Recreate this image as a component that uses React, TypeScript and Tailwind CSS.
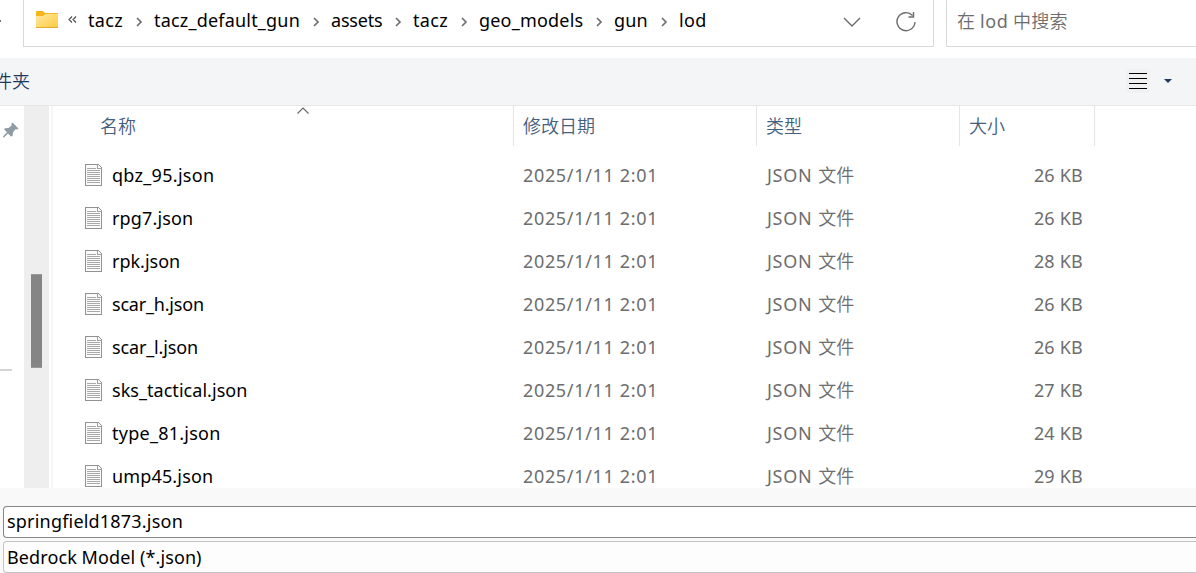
import React from "react";

const crumbs = [
  { label: "tacz", width: "w-[66px]", tracking: "tracking-[0.3px]" },
  { label: "tacz_default_gun", width: "w-[177px]", tracking: "tracking-[0.2px]" },
  { label: "assets", width: "w-[82px]", tracking: "tracking-[-0.2px]" },
  { label: "tacz", width: "w-[66px]", tracking: "tracking-[0.3px]" },
  { label: "geo_models", width: "w-[135px]", tracking: "tracking-[0.2px]" },
  { label: "gun", width: "w-[65px]", tracking: "tracking-[0.1px]" },
  { label: "lod", width: "w-[40px]", tracking: "tracking-[0.3px]" },
];

const files = [
  { name: "qbz_95.json", size: "26 KB", tracking: "tracking-[0.3px]" },
  { name: "rpg7.json", size: "26 KB", tracking: "tracking-[0.15px]" },
  { name: "rpk.json", size: "28 KB", tracking: "tracking-normal" },
  { name: "scar_h.json", size: "26 KB", tracking: "tracking-[-0.2px]" },
  { name: "scar_l.json", size: "26 KB", tracking: "tracking-[-0.15px]" },
  { name: "sks_tactical.json", size: "27 KB", tracking: "tracking-[0.04px]" },
  { name: "type_81.json", size: "24 KB", tracking: "tracking-[0.25px]" },
  { name: "ump45.json", size: "29 KB", tracking: "tracking-[0.15px]" },
];

function FolderIcon() {
  return (
    <svg width="22" height="18" viewBox="0 0 22 18" className="shrink-0">
      <defs>
        <linearGradient id="folder" x1="0" y1="0" x2="1" y2="1">
          <stop offset="0" stopColor="#ffe8a3" />
          <stop offset="1" stopColor="#fdcb40" />
        </linearGradient>
      </defs>
      <path d="M0 1Q0 0 1 0H7L9 2H21Q22 2 22 3V8H0Z" fill="#f5b51d" />
      <path d="M0 5H7L9.500 3H22V16.500H0Z" fill="url(#folder)" />
      <path d="M0 16H22V16.500Q22 17 21 17H1Q0 17 0 16.500Z" fill="#e2ac2c" />
    </svg>
  );
}

function FileIcon() {
  return (
    <svg width="18" height="22" viewBox="0 0 18 22" className="shrink-0" shapeRendering="crispEdges">
      <path d="M0.500 0.500H13.500L16.500 3.500V21.500H0.500Z" fill="#fbfbfb" stroke="#929292" />
      <path d="M12.500 0.500V4.500H16.500" fill="none" stroke="#a0a0a0" />
      <path d="M2 4.500H11M2 6.500H15M2 8.500H15M2 10.500H15M2 12.500H15M2 14.500H15M2 16.500H15M2 18.500H15" stroke="#a9a9a9" />
    </svg>
  );
}

function Crumb({ label, width, tracking, last }: { label: string; width: string; tracking: string; last: boolean }) {
  return (
    <div className={`flex shrink-0 items-center justify-between pr-[18px] ${width}`}>
      <span className={`whitespace-nowrap ${tracking}`}>{label}</span>
      {!last && (
        <svg width="7" height="10" viewBox="0 0 7 10" className="-mr-[7px] mt-[3px] shrink-0">
          <path d="M1 1L5 5L1 9" fill="none" stroke="#6e6e6e" strokeWidth="1.700" />
        </svg>
      )}
    </div>
  );
}

export default function App() {
  return (
    <div className="flex h-[573px] w-[1196px] flex-col overflow-hidden bg-white font-['Noto_Sans','Noto_Sans_CJK_SC',sans-serif] text-[18px] leading-6 text-black">
      <div className="flex h-[58px] shrink-0 items-start">
        <div className="w-[23px] shrink-0 pt-5">
          <div className="h-0.5 w-px bg-[#777]" />
        </div>
        <div className="flex h-[47px] w-[911px] shrink-0 border border-t-0 border-[#d9d9d9] pl-3">
          <div className="pt-[11px]">
            <FolderIcon />
          </div>
          <svg width="9" height="7" viewBox="0 0 9 7" className="ml-2.5 mt-4 shrink-0">
            <path d="M4 0.500L1 3.500L4 6.500M8 0.500L5 3.500L8 6.500" fill="none" stroke="#4a4a4a" strokeWidth="1.100" />
          </svg>
          <div className="ml-[11px] flex h-10 flex-1 items-center">
            {crumbs.map((c, i) => (
              <Crumb key={i} {...c} last={i === crumbs.length - 1} />
            ))}
          </div>
          <svg width="18" height="10" viewBox="0 0 18 10" className="mr-[34px] mt-[17px] shrink-0">
            <path d="M1 1L9 9L17 1" fill="none" stroke="#6b6b6b" strokeWidth="1.400" />
          </svg>
          <svg width="22" height="22" viewBox="0 0 22 22" className="mr-4 mt-[11px] shrink-0">
            <path d="M17.500 4.400A9 9 0 1 0 20 11M18.500 1V6H13.500" fill="none" stroke="#6b6b6b" strokeWidth="1.400" />
          </svg>
        </div>
        <div className="ml-3 h-[47px] flex-1 border-b border-l border-[#d9d9d9] pl-[10px] pt-[9px] font-[350] tracking-[0.2px] text-[#6d6d6d]">
          在 <span className="font-normal tracking-[0.5px]">lod</span> 中搜索
        </div>
      </div>

      <div className="flex h-12 shrink-0 items-center justify-between border-b border-[#e5e7e9] bg-[#f4f5f7]">
        <span className="-ml-[6px] whitespace-nowrap pb-px font-[350] text-[#1e395b]">件夹</span>
        <div className="mb-px mr-6 flex items-center gap-[14px]">
          <div className="rounded-sm bg-[#f1f1f1] p-[3px]">
            <svg width="18" height="18" viewBox="0 0 18 18" shapeRendering="crispEdges">
              <path d="M0 1.500H18M0 6.500H18M0 11.500H18M0 16.500H18" stroke="#000" />
            </svg>
          </div>
          <svg width="8" height="4" viewBox="0 0 8 4">
            <path d="M0 0H8L4 4Z" fill="#1e395b" />
          </svg>
        </div>
      </div>

      <div className="flex h-[382px] shrink-0 overflow-hidden">
        <div className="w-6 shrink-0 pt-4">
          <svg width="17" height="17" viewBox="0 0 17 17" className="ml-0.5">
            <path d="M10.500 0.500L16.500 6.500L15.200 7.400L13.500 7.300L11 10.500L10.500 14L9 14.500L6 11.500L2 15.500L1 15.200L1.300 14L5 10.300L2 7.300L3 6.200L6.500 6L9.500 3.500L9.500 1.500Z" fill="#8f9ca6" />
          </svg>
          <div className="mt-[230px] h-0.5 w-3 bg-[#d4d4d4]" />
        </div>
        <div className="w-[25px] shrink-0 bg-[#eeeeee] pl-[7px] pt-[168px]">
          <div className="h-[94px] w-[11px] border-y border-[#999] bg-[#858585]" />
        </div>
        <div className="ml-0.5 w-0.5 shrink-0 bg-[#f7f7f7]" />
        <div className="flex flex-1 flex-col">
          <div className="flex h-10 shrink-0 font-[350] text-[#44607c]">
            <div className="relative w-[461px] border-r border-[#e5e5e5] pl-[47px] pt-[8px]">
              名称
              <svg width="12" height="7" viewBox="0 0 12 7" className="absolute left-[243.5px] top-px">
                <path d="M0.500 6.500L6 1L11.500 6.500" fill="none" stroke="#666" strokeWidth="1.100" />
              </svg>
            </div>
            <div className="w-[243px] border-r border-[#e5e5e5] pl-[9px] pt-[8px]">修改日期</div>
            <div className="w-[203px] border-r border-[#e5e5e5] pl-[9px] pt-[8px]">类型</div>
            <div className="w-[135px] border-r border-[#e5e5e5] pl-[9px] pt-[8px]">大小</div>
          </div>
          <div className="pt-[7px]">
            {files.map((f) => (
              <div key={f.name} className="flex h-[43px] items-center">
                <div className="flex w-[470px] items-center gap-[9px] pl-8">
                  <FileIcon />
                  <span className={f.tracking}>{f.name}</span>
                </div>
                <div className="w-[243px] tracking-[0.66px] text-[#6d6d6d]">2025/1/11 2:01</div>
                <div className="flex w-[203px] justify-start gap-[6px] pl-px text-[#6d6d6d]">
                  <span className="tracking-[0.7px]">JSON</span>
                  <span className="font-[350]">文件</span>
                </div>
                <div className="w-[114px] text-right tracking-[0.2px] text-[#6d6d6d]">{f.size}</div>
              </div>
            ))}
          </div>
        </div>
      </div>

      <div className="flex flex-1 flex-col gap-[3px] bg-[#f9f9f9] pl-[3px] pt-[18px]">
        <div className="h-8 rounded-l-sm border border-r-0 border-[#858585] bg-white pl-[3px] pt-[2px] tracking-[0.2px]">springfield1873.json</div>
        <div className="h-8 rounded-l-sm border border-r-0 border-[#c4c4c4] bg-[#fdfdfd] pl-[3px] pt-[3px] tracking-[0.1px]">Bedrock Model (*.json)</div>
      </div>
    </div>
  );
}
